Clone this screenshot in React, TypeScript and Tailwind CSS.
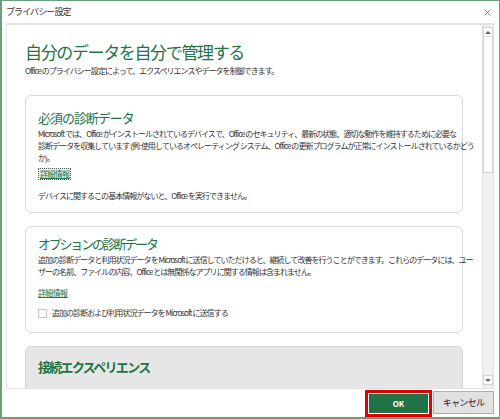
import { X } from 'lucide-react'

const green = 'text-[#217346]'
const body = 'text-[8px] leading-[12px] tracking-[-0.12em] text-[#333] whitespace-nowrap'

function Card({ children, className = '' }: { children: React.ReactNode; className?: string }) {
  return <div className={`rounded-[6px] border border-[#d9d9d9] pl-[12px] pr-3 ${className}`}>{children}</div>
}

function ScrollBar() {
  return (
    <div className="flex w-[11px] flex-col border-l border-[#e3e3e3] bg-[#f0f0f0] pt-[2px] pb-[3px]">
      <div className="flex h-[10px] items-center justify-center bg-white border border-[#d6d6d6]">
        <div className="h-0 w-0 border-x-[3px] border-b-[3px] border-x-transparent border-b-[#606060]" />
      </div>
      <div className="h-[136px] border border-t-0 border-[#d0d0d0] bg-white" />
      <div className="flex-1" />
      <div className="flex h-[10px] items-center justify-center bg-white border border-[#d6d6d6]">
        <div className="h-0 w-0 border-x-[3px] border-t-[3px] border-x-transparent border-t-[#606060]" />
      </div>
    </div>
  )
}

export default function App() {
  return (
    <div className="flex h-[419px] w-[500px] flex-col border border-l-2 border-b-2 border-[#6a9f7d] bg-white font-['Noto_Sans_CJK_JP',sans-serif]">
      {/* barre de titre */}
      <div className="flex h-[22px] shrink-0 items-center justify-between pl-[4px] pr-[6px]">
        <span className="text-[9px] tracking-[-0.1em] text-[#333]">プライバシー設定</span>
        <X size={11} strokeWidth={1.3} className="text-[#555]" />
      </div>

      {/* panneau */}
      <div className="ml-[4px] mr-[5px] flex h-[366px] shrink-0 border border-t-2 border-[#e2e2e2]">
        <div className="flex-1 overflow-hidden pl-[18px] pr-[19px] pt-[15px]">
          <h1 className={`text-[17px] leading-[24px] tracking-[-0.08em] ${green}`}>自分のデータを自分で管理する</h1>
          <p className={`mt-[1px] ${body}`}>
            Office のプライバシー設定によって、エクスペリエンスやデータを制御できます。
          </p>

          <Card className="mt-[18px] pt-[12px] pb-[10px]">
            <h2 className={`text-[13px] leading-[20px] tracking-[-0.08em] ${green}`}>必須の診断データ</h2>
            <p className={body}>
              Microsoft では、Office がインストールされているデバイスで、Office のセキュリティ、最新の状態、適切な動作を維持するために必要な
              <br />
              診断データを収集しています (例: 使用しているオペレーティング システム、Office の更新プログラムが正常にインストールされているかどう
              <br />
              か)。
            </p>
            <div className="mt-[4px] flex">
              <a className="border border-dotted border-[#555] bg-[#e8efe9] px-[1px] text-[8px] leading-[10px] tracking-[-0.08em] text-[#217346] underline">
                詳細情報
              </a>
            </div>
            <p className={`mt-[10px] ${body}`}>デバイスに関するこの基本情報がないと、Office を実行できません。</p>
          </Card>

          <Card className="mt-[13px] pt-[7px] pb-[13px]">
            <h2 className={`text-[13px] leading-[20px] tracking-[-0.17em] ${green}`}>オプションの診断データ</h2>
            <p className={body}>
              追加の診断データと利用状況データを Microsoft に送信していただけると、継続して改善を行うことができます。これらのデータには、ユー
              <br />
              ザーの名前、ファイルの内容、Office とは無関係なアプリに関する情報は含まれません。
            </p>
            <div className="mt-[9px] flex">
              <a className="text-[8px] leading-[12px] tracking-[-0.08em] text-[#217346] underline">詳細情報</a>
            </div>
            <label className={`mt-[8px] flex items-center gap-[5px] ${body}`}>
              <span className="h-[9px] w-[9px] shrink-0 border border-[#c6c6c6] bg-white" />
              追加の診断および利用状況データを Microsoft に送信する
            </label>
          </Card>

          <div className="mt-[13px] h-[60px] rounded-t-[6px] border border-[#d4d4d4] bg-[#e6e6e6] pl-[12px] pt-[10px]">
            <h2 className={`text-[13px] font-bold leading-[20px] tracking-[-0.13em] ${green}`}>接続エクスペリエンス</h2>
          </div>
        </div>
        <ScrollBar />
      </div>

      {/* boutons */}
      <div className="flex flex-1 items-start justify-end gap-[1px] pr-[5px] pt-[1px]">
        <div className="border-[3px] border-[#e00000] p-[1px]">
          <button className="flex h-[19px] w-[59px] items-center justify-center bg-[#217346] text-[8px] font-bold text-white">
            OK
          </button>
        </div>
        <button className="mt-[1px] flex h-[23px] w-[61px] items-center justify-center border border-[#adadad] bg-[#e1e1e1] text-[9px] tracking-[-0.08em] text-[#222]">
          キャンセル
        </button>
      </div>
    </div>
  )
}
